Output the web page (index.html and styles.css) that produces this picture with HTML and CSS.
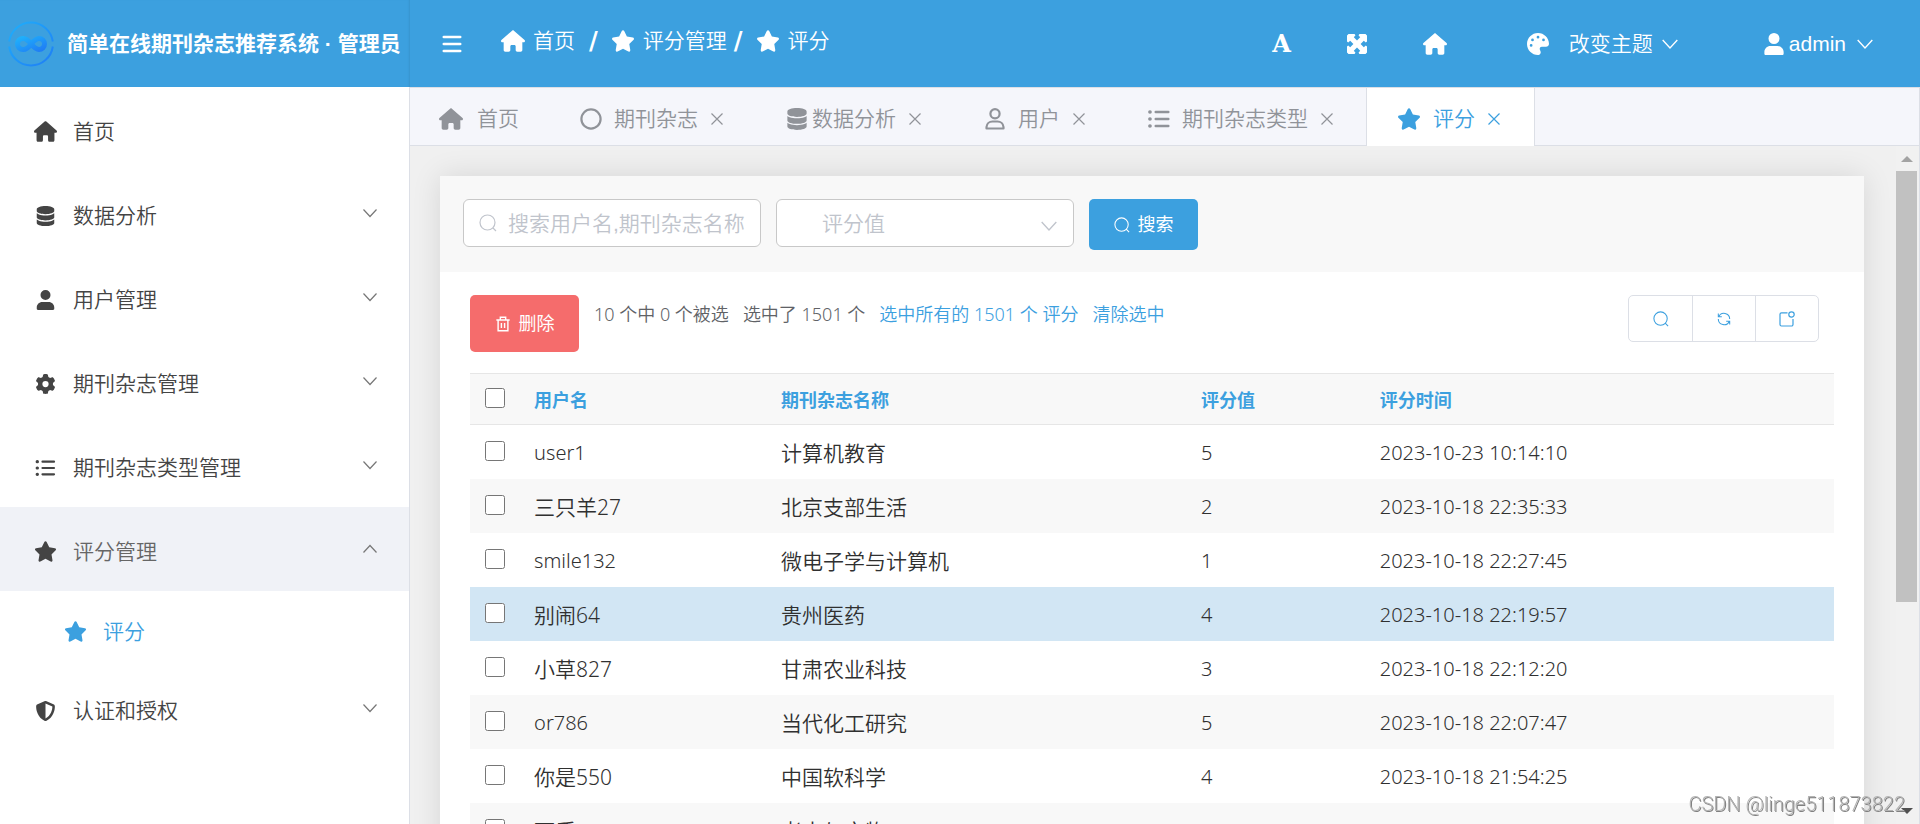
FILE: index.html
```html
<!DOCTYPE html>
<html lang="zh-CN">
<head>
<meta charset="utf-8">
<title>简单在线期刊杂志推荐系统 · 管理员</title>
<link rel="stylesheet" href="styles.css">
</head>
<body>
<svg class="sprite" aria-hidden="true">
  <symbol id="i-home" viewBox="0 0 576 512"><path d="M575.8 255.5c0 18-15 32.1-32 32.1h-32l.7 160.2c0 2.7-.2 5.4-.5 8.1V472c0 22.1-17.9 40-40 40H456c-1.100 0-2.200 0-3.300-.1c-1.400.1-2.800.1-4.200.1H416 392c-22.100 0-40-17.900-40-40V448 384c0-17.700-14.300-32-32-32H256c-17.700 0-32 14.300-32 32v64 24c0 22.100-17.900 40-40 40H160 128.100c-1.500 0-3-.1-4.500-.2c-1.200.1-2.400.2-3.600.2H104c-22.100 0-40-17.900-40-40V360c0-.9 0-1.900.1-2.800V287.600H32c-18 0-32-14-32-32.100c0-9 3-17 10-24L266.400 8c7-7 15-8 22-8s15 2 21 7L564.800 231.500c8 7 12 15 11 24z"/></symbol>
  <symbol id="i-star" viewBox="0 0 576 512"><path d="M316.900 18C311.600 7 300.400 0 288.100 0s-23.400 7-28.800 18L195 150.300 51.400 171.500c-12 1.800-22 10.200-25.700 21.700s-.7 24.200 7.900 32.700L137.800 329 113.200 474.700c-2 12 3 24.200 12.900 31.300s23 8 33.800 2.300l128.300-68.500 128.300 68.500c10.800 5.700 23.900 4.900 33.800-2.300s14.900-19.300 12.900-31.300L438.500 329 542.700 225.900c8.600-8.500 11.700-21.200 7.900-32.700s-13.700-19.900-25.700-21.700L381.200 150.300 316.900 18z"/></symbol>
  <symbol id="i-db" viewBox="0 0 448 512"><path d="M448 80v48c0 44.200-100.300 80-224 80S0 172.200 0 128V80C0 35.800 100.300 0 224 0S448 35.800 448 80zM393.200 214.700c20.800-7.400 39.900-16.900 54.800-28.600V288c0 44.200-100.300 80-224 80S0 332.200 0 288V186.100c14.900 11.800 34 21.200 54.800 28.600C99.700 230.700 159.500 240 224 240s124.300-9.300 169.200-25.300zM0 346.100c14.900 11.800 34 21.200 54.800 28.600C99.700 390.700 159.500 400 224 400s124.300-9.300 169.200-25.300c20.800-7.400 39.900-16.900 54.800-28.600V432c0 44.200-100.300 80-224 80S0 476.200 0 432V346.100z"/></symbol>
  <symbol id="i-user" viewBox="0 0 448 512"><path d="M224 256A128 128 0 1 0 224 0a128 128 0 1 0 0 256zM140 304C63 304 0 367 0 444V482C0 499 13 512 30 512H418C435 512 448 499 448 482V444C448 367 385 304 308 304z"/></symbol>
  <symbol id="i-gear" viewBox="0 0 512 512"><path fill-rule="evenodd" d="M495.900 166.600c3.200 8.700.5 18.400-6.400 24.600l-43.300 39.400c1.100 8.300 1.700 16.800 1.700 25.400s-.6 17.100-1.700 25.400l43.300 39.400c6.900 6.200 9.600 15.900 6.400 24.600c-4.400 11.900-9.700 23.300-15.800 34.300l-4.700 8.100c-6.600 11-14 21.400-22.100 31.200c-5.900 7.200-15.700 9.600-24.500 6.800l-55.700-17.700c-13.400 10.300-28.200 18.900-44 25.400l-12.500 57.100c-2 9.100-9 16.300-18.200 17.800c-13.800 2.300-28 3.500-42.500 3.500s-28.700-1.200-42.500-3.500c-9.200-1.500-16.200-8.700-18.200-17.800l-12.500-57.100c-15.800-6.500-30.600-15.100-44-25.400L83.100 425.900c-8.800 2.800-18.600.3-24.500-6.800c-8.100-9.800-15.500-20.200-22.100-31.200l-4.700-8.100c-6.100-11-11.400-22.400-15.800-34.300c-3.200-8.700-.5-18.400 6.400-24.600l43.300-39.400C64.600 273.100 64 264.600 64 256s.6-17.100 1.700-25.400L22.400 191.200c-6.900-6.200-9.600-15.900-6.400-24.600c4.400-11.900 9.700-23.300 15.800-34.300l4.700-8.100c6.600-11 14-21.400 22.100-31.200c5.900-7.200 15.700-9.600 24.500-6.800l55.700 17.700c13.400-10.300 28.200-18.900 44-25.400l12.500-57.100c2-9.100 9-16.300 18.200-17.800C227.300 1.200 241.500 0 256 0s28.700 1.200 42.500 3.500c9.200 1.500 16.200 8.700 18.200 17.800l12.500 57.100c15.800 6.500 30.600 15.100 44 25.400l55.700-17.700c8.800-2.800 18.600-.3 24.500 6.800c8.100 9.800 15.500 20.200 22.100 31.200l4.700 8.100c6.100 11 11.400 22.400 15.800 34.300zM256 336a80 80 0 1 0 0-160 80 80 0 1 0 0 160z"/></symbol>
  <symbol id="i-shield" viewBox="0 0 512 512"><path fill-rule="evenodd" d="M256 0c4.600 0 9.200 1 13.400 2.900L457.700 82.800c22 9.300 38.400 31 38.300 57.200c-.5 99.200-41.300 280.700-213.600 363.200c-16.700 8-36.100 8-52.800 0C57.300 420.700 16.500 239.200 16 140c-.1-26.200 16.300-47.900 38.300-57.200L242.700 2.900C246.800 1 251.400 0 256 0zm0 66.800V444.800C394 378 431.100 230.100 432 141.400L256 66.800z"/></symbol>
  <symbol id="i-palette" viewBox="0 0 512 512"><path fill-rule="evenodd" d="M512 256c0 .9 0 1.800 0 2.700c-.4 36.500-33.600 61.300-70.100 61.300H344c-26.500 0-48 21.500-48 48c0 3.400.4 6.700 1 9.900c2.100 10.200 6.500 20 10.800 29.900c6.100 13.800 12.100 27.500 12.100 42c0 31.800-21.600 60.700-53.400 62c-3.500.1-7 .2-10.600.2C114.600 512 0 397.400 0 256S114.600 0 256 0S512 114.600 512 256zM128 288a32 32 0 1 0-64 0 32 32 0 1 0 64 0zm0-96a32 32 0 1 0 0-64 32 32 0 1 0 0 64zM288 96a32 32 0 1 0-64 0 32 32 0 1 0 64 0zm96 96a32 32 0 1 0 0-64 32 32 0 1 0 0 64z"/></symbol>
  <symbol id="i-list" viewBox="0 0 20 16"><g stroke="currentColor" stroke-linecap="round" fill="none"><path stroke-width="2.200" d="M7 1.700H18.500M7 8H18.500M7 14.300H18.500"/><path stroke-width="3.200" d="M1.700 1.700h.2M1.700 8h.2M1.700 14.300h.2"/></g></symbol>
  <symbol id="i-bars" viewBox="0 0 20 18"><path stroke="currentColor" stroke-width="2.600" stroke-linecap="round" fill="none" d="M1.800 2H18.200M1.800 9H18.200M1.800 16H18.200"/></symbol>
  <symbol id="i-expand" viewBox="0 0 20 20"><path d="M1.500 0H7.500L8.500 1.200 6.800 3.200 10 6.400 13.200 3.200 11.500 1.200 12.500 0H18.500L20 1.500V7.500L18.800 8.500 16.800 6.800 13.600 10 16.800 13.200 18.800 11.500 20 12.500V18.500L18.500 20H12.500L11.500 18.800 13.200 16.800 10 13.600 6.800 16.800 8.500 18.800 7.500 20H1.500L0 18.500V12.500L1.200 11.500 3.200 13.200 6.400 10 3.200 6.800 1.200 8.500 0 7.500V1.500z"/></symbol>
  <symbol id="i-down" viewBox="0 0 16 16"><path class="line" d="M1.500 4.500 8 11.500 14.500 4.500"/></symbol>
  <symbol id="i-up" viewBox="0 0 16 16"><path class="line" d="M1.500 11.500 8 4.500 14.500 11.500"/></symbol>
  <symbol id="i-close" viewBox="0 0 14 14"><path class="line" d="M1.500 1.500 12.500 12.500M12.500 1.500 1.500 12.500"/></symbol>
  <symbol id="i-circle" viewBox="0 0 22 22"><circle cx="11" cy="11" r="9.600" fill="none" stroke="currentColor" stroke-width="2.200"/></symbol>
  <symbol id="i-person" viewBox="0 0 20 22"><g fill="none" stroke="currentColor" stroke-width="2.200"><circle cx="10" cy="5.800" r="4.600"/><path stroke-linejoin="round" d="M1.500 20.500V19A6 6 0 0 1 7.500 13.500H12.500A6 6 0 0 1 18.500 19V20.500z"/></g></symbol>
  <symbol id="i-search" viewBox="0 0 18 18"><path class="line" d="M14 14 17 17M16 8.500A7.500 7.500 0 1 1 1 8.500A7.500 7.500 0 1 1 16 8.500"/></symbol>
  <symbol id="i-trash" viewBox="0 0 16 18"><path class="line bold" d="M.5 4.500H15.500M5 4V1.500H11V4M2.500 4.500V16.500H13.500V4.500M6.200 8V13.500M9.800 8V13.500"/></symbol>
  <symbol id="i-refresh" viewBox="0 0 16 16"><path class="line" d="M2 5.500A6.500 6.500 0 0 1 14.500 8M1.500 1.800V5.500H5.500M14 10.500A6.500 6.500 0 0 1 1.500 8M14.500 14.200V10.500H10.500"/></symbol>
  <symbol id="i-set" viewBox="0 0 16 16"><path class="line" d="M8.500 1.800H2.500A1.500 1.500 0 0 0 1 3.300V13.500A1.500 1.500 0 0 0 2.500 15H12.500A1.500 1.500 0 0 0 14 13.500V8"/><circle class="line" cx="12.500" cy="3.500" r="2.700"/></symbol>
</svg>

<div class="app">
  <aside class="side">
    <div class="brand">
      <svg class="brand-logo" viewBox="0 0 46 46" aria-hidden="true">
        <defs><linearGradient id="lg" x1="0" y1="0" x2="1" y2="1"><stop offset="0" stop-color="#1fb0fb"/><stop offset="1" stop-color="#1f7df5"/></linearGradient></defs>
        <path fill="none" stroke="url(#lg)" stroke-width="2" d="M1.200 20.500A22 22 0 0 1 44.800 20.500M1.200 25.500A22 22 0 0 0 44.800 25.500"/>
        <path fill="none" stroke="url(#lg)" stroke-width="5" stroke-linecap="round" d="M15 17.500C22 17 24 28.500 31 28.500A5.500 5.500 0 0 0 31 17.500C24 17.500 22 29 15 28.500A5.500 5.500 0 0 1 15 17.500"/>
      </svg>
      <h1 class="brand-name">简单在线期刊杂志推荐系统 · 管理员</h1>
    </div>
    <nav class="menu">
      <a class="menu-item" href="#"><svg class="ico"><use href="#i-home"/></svg><span>首页</span></a>
      <a class="menu-item" href="#"><svg class="ico small"><use href="#i-db"/></svg><span>数据分析</span><svg class="arrow"><use href="#i-down"/></svg></a>
      <a class="menu-item" href="#"><svg class="ico small"><use href="#i-user"/></svg><span>用户管理</span><svg class="arrow"><use href="#i-down"/></svg></a>
      <a class="menu-item" href="#"><svg class="ico small"><use href="#i-gear"/></svg><span>期刊杂志管理</span><svg class="arrow"><use href="#i-down"/></svg></a>
      <a class="menu-item" href="#"><svg class="ico list"><use href="#i-list"/></svg><span>期刊杂志类型管理</span><svg class="arrow"><use href="#i-down"/></svg></a>
      <a class="menu-item open" href="#"><svg class="ico"><use href="#i-star"/></svg><span>评分管理</span><svg class="arrow"><use href="#i-up"/></svg></a>
      <a class="menu-item sub" href="#"><svg class="ico"><use href="#i-star"/></svg><span>评分</span></a>
      <a class="menu-item" href="#"><svg class="ico small"><use href="#i-shield"/></svg><span>认证和授权</span><svg class="arrow"><use href="#i-down"/></svg></a>
    </nav>
  </aside>

  <div class="main">
    <header class="top">
      <button class="icon-btn burger" aria-label="折叠菜单"><svg class="i20"><use href="#i-bars"/></svg></button>
      <nav class="crumbs">
        <a href="#"><svg class="i24"><use href="#i-home"/></svg>首页</a>
        <b class="slash first">/</b>
        <a href="#"><svg class="i24"><use href="#i-star"/></svg>评分管理</a>
        <b class="slash">/</b>
        <a href="#"><svg class="i24"><use href="#i-star"/></svg>评分</a>
      </nav>
      <div class="tools">
        <button class="icon-btn letter" aria-label="字体">A</button>
        <button class="icon-btn" aria-label="全屏"><svg class="i20"><use href="#i-expand"/></svg></button>
        <button class="icon-btn" aria-label="主页"><svg class="i24"><use href="#i-home"/></svg></button>
        <button class="icon-btn theme"><svg class="i22"><use href="#i-palette"/></svg><span>改变主题</span><svg class="i18"><use href="#i-down"/></svg></button>
        <button class="icon-btn account"><svg class="i22"><use href="#i-user"/></svg><span>admin</span><svg class="i18"><use href="#i-down"/></svg></button>
      </div>
    </header>

    <div class="tabs">
      <div class="tab home"><svg class="i24"><use href="#i-home"/></svg><span>首页</span></div>
      <div class="tab"><svg class="i22"><use href="#i-circle"/></svg><span>期刊杂志</span><button class="close" aria-label="关闭"><svg class="i14"><use href="#i-close"/></svg></button></div>
      <div class="tab tight"><svg class="i22"><use href="#i-db"/></svg><span>数据分析</span><button class="close" aria-label="关闭"><svg class="i14"><use href="#i-close"/></svg></button></div>
      <div class="tab"><svg class="i22"><use href="#i-person"/></svg><span>用户</span><button class="close" aria-label="关闭"><svg class="i14"><use href="#i-close"/></svg></button></div>
      <div class="tab"><svg class="i22"><use href="#i-list"/></svg><span>期刊杂志类型</span><button class="close" aria-label="关闭"><svg class="i14"><use href="#i-close"/></svg></button></div>
      <div class="tab active"><svg class="i24"><use href="#i-star"/></svg><span>评分</span><button class="close" aria-label="关闭"><svg class="i14"><use href="#i-close"/></svg></button></div>
    </div>

    <div class="body">
      <main class="view">
        <section class="card">
          <form class="filters">
            <div class="field">
              <svg class="lead"><use href="#i-search"/></svg>
              <input type="text" aria-label="搜索" placeholder="搜索用户名,期刊杂志名称">
            </div>
            <div class="field">
              <select aria-label="评分值"><option>评分值</option></select>
              <svg class="trail"><use href="#i-down"/></svg>
            </div>
            <button class="btn primary" type="button"><svg class="i16"><use href="#i-search"/></svg>搜索</button>
          </form>

          <div class="content">
            <div class="actions">
              <button class="btn danger" type="button"><svg class="i16"><use href="#i-trash"/></svg>删除</button>
              <div class="summary">
                <span>10 个中 0 个被选</span>
                <span>选中了 1501 个</span>
                <a href="#">选中所有的 1501 个 评分</a>
                <a href="#">清除选中</a>
              </div>
              <div class="group">
                <button type="button" aria-label="搜索"><svg class="i16"><use href="#i-search"/></svg></button>
                <button type="button" aria-label="刷新"><svg class="i14"><use href="#i-refresh"/></svg></button>
                <button type="button" aria-label="设置"><svg class="i16"><use href="#i-set"/></svg></button>
              </div>
            </div>

            <table class="grid">
              <colgroup><col class="c-check"><col class="c-user"><col class="c-name"><col class="c-score"><col class="c-time"></colgroup>
              <thead>
                <tr><th><input type="checkbox" aria-label="全选"></th><th>用户名</th><th>期刊杂志名称</th><th>评分值</th><th>评分时间</th></tr>
              </thead>
              <tbody>
                <tr><td><input type="checkbox" aria-label="user1"></td><td class="latin">user1</td><td>计算机教育</td><td class="latin">5</td><td class="latin">2023-10-23 10:14:10</td></tr>
                <tr><td><input type="checkbox" aria-label="三只羊27"></td><td>三只羊27</td><td>北京支部生活</td><td class="latin">2</td><td class="latin">2023-10-18 22:35:33</td></tr>
                <tr><td><input type="checkbox" aria-label="smile132"></td><td class="latin">smile132</td><td>微电子学与计算机</td><td class="latin">1</td><td class="latin">2023-10-18 22:27:45</td></tr>
                <tr class="hover"><td><input type="checkbox" aria-label="别闹64"></td><td>别闹64</td><td>贵州医药</td><td class="latin">4</td><td class="latin">2023-10-18 22:19:57</td></tr>
                <tr><td><input type="checkbox" aria-label="小草827"></td><td>小草827</td><td>甘肃农业科技</td><td class="latin">3</td><td class="latin">2023-10-18 22:12:20</td></tr>
                <tr><td><input type="checkbox" aria-label="or786"></td><td class="latin">or786</td><td>当代化工研究</td><td class="latin">5</td><td class="latin">2023-10-18 22:07:47</td></tr>
                <tr><td><input type="checkbox" aria-label="你是550"></td><td>你是550</td><td>中国软科学</td><td class="latin">4</td><td class="latin">2023-10-18 21:54:25</td></tr>
                <tr><td><input type="checkbox" aria-label="丽质"></td><td>丽质</td><td>考古与文物</td><td></td><td></td></tr>
              </tbody>
            </table>
          </div>
        </section>
      </main>
      <div class="scrollbar" aria-hidden="true"><i class="up"></i><i class="thumb"></i><i class="down"></i></div>
    </div>
  </div>
</div>
<div class="watermark">CSDN @linge511873822</div>
</body>
</html>
```
FILE: styles.css
```css
* { box-sizing: border-box; }

:root {
  --blue: #3ca0df;
  --gray: #909399;
  --line: #dcdfe6;
}

body {
  margin: 0;
  height: 100vh;
  overflow: hidden;
  font-family: "Liberation Sans", "Noto Sans CJK SC", sans-serif;
  font-size: 21px;
  font-weight: 350;
  line-height: 32px;
  color: #303030;
}

a { color: inherit; text-decoration: none; }
button { font: inherit; color: inherit; border: 0; background: none; padding: 0; }
svg { fill: currentColor; flex: none; }
.sprite { display: none; }
.line { fill: none; stroke: currentColor; stroke-width: 1.2; }
.line.bold { stroke-width: 1.6; }

.i14 { width: 14px; height: 14px; }
.i16 { width: 16px; height: 16px; }
.i18 { width: 18px; height: 18px; }
.i20 { width: 20px; height: 20px; }
.i22 { width: 22px; height: 22px; }
.i24 { width: 24px; height: 22px; }

.app { display: flex; height: 100%; }

/* sidebar */
.side {
  flex: none;
  width: 410px;
  background: #fff;
  border-right: 1px solid var(--line);
}
.brand {
  display: flex;
  align-items: center;
  gap: 13px;
  height: 87px;
  margin-right: -1px;
  padding-left: 8px;
  background: var(--blue);
  color: #fff;
  white-space: nowrap;
  box-shadow: inset -2px 0 2px -1px rgba(0, 0, 0, .08);
}
.brand-logo { width: 46px; height: 46px; }
.brand-name { margin: 0; font-size: 21px; font-weight: 700; }
.menu-item {
  display: flex;
  align-items: center;
  height: 84px;
  padding: 5px 31px 0 34px;
  color: #444;
}
.menu-item .ico { width: 23px; height: 21px; margin-right: 16px; }
.menu-item .small { height: 20px; }
.menu-item .list { height: 16px; }
.menu-item .arrow { width: 16px; height: 16px; margin: 0 0 6px auto; color: #777; }
.menu-item.open { background: #f0f2f7; color: #666; }
.menu-item.open .ico { color: #444; }
.menu-item.sub { height: 75px; padding: 6px 31px 0 64px; color: var(--blue); }

/* header */
.main { flex: 1; min-width: 0; display: flex; flex-direction: column; }
.top {
  flex: none;
  display: flex;
  align-items: center;
  height: 87px;
  padding: 0 46px 0 32px;
  background: var(--blue);
  color: #fff;
}
.icon-btn { display: flex; align-items: center; }
.crumbs { display: flex; align-items: center; margin-left: 39px; padding-bottom: 6px; }
.crumbs a { display: flex; align-items: center; gap: 8px; }
.slash { padding: 0 13px 0 7px; font-family: "DejaVu Sans", sans-serif; font-size: 24px; }
.slash.first { padding-left: 14px; }
.tools { display: flex; align-items: center; margin-left: auto; }
.tools .icon-btn { margin-left: 56px; }
.tools .letter { font: 700 24px/32px "DejaVu Serif", serif; }
.tools .theme { gap: 8px; margin-left: 80px; }
.tools .theme span { padding-left: 12px; }
.tools .account { gap: 4px; margin-left: 84px; }
.tools .account .i18 { margin-left: 6px; }

/* tabs */
.tabs {
  flex: none;
  display: flex;
  height: 59px;
  background: #f5f6fb;
  border: 1px solid var(--line);
  border-left: 0;
  color: var(--gray);
}
.tab { display: flex; align-items: center; gap: 12px; padding: 4px 30px 0 32px; }
.tab.home { gap: 14px; padding: 4px 29px 0; }
.tab.tight { gap: 4px; }
.tab.tight .close { margin-left: 8px; }
.close { display: flex; }
.tab.active {
  height: 59px;
  margin-left: 2px;
  padding: 4px 33px 2px 30px;
  background: #fff;
  color: var(--blue);
  border: solid var(--line);
  border-width: 0 1px;
}

/* page body */
.body { flex: 1; min-height: 0; display: flex; background: #f0f0f0; border-right: 1px solid var(--line); }
.view { flex: 1; min-width: 0; overflow: hidden; padding: 30px 32px 0 30px; }
.card { background: #fff; box-shadow: 0 0 28px rgba(0, 0, 0, .11); }
.filters { display: flex; gap: 15px; padding: 23px; height: 96px; background: #f8f8f8; }
.field { position: relative; width: 298px; height: 48px; color: #c0c4cc; }
.field input, .field select {
  width: 100%;
  height: 100%;
  border: 1px solid #c8c8c8;
  border-radius: 6px;
  background: #fff;
  font: inherit;
  color: #c0c4cc;
  outline: 0;
  appearance: none;
}
.field input { padding: 2px 0 0 44px; }
.field input::placeholder { color: #c0c4cc; opacity: 1; }
.field select { padding: 2px 44px 0 45px; }
.lead, .trail { position: absolute; width: 18px; height: 18px; top: 15px; }
.lead { left: 16px; }
.trail { right: 16px; top: 18px; }

.btn {
  display: flex;
  align-items: center;
  justify-content: center;
  gap: 8px;
  width: 109px;
  height: 51px;
  border-radius: 5px;
  color: #fff;
  font-size: 18px;
  font-weight: 400;
}
.primary { background: var(--blue); }
.danger { height: 57px; background: #f56c6c; }

.content { padding: 23px 30px 0; }
.actions { display: flex; align-items: flex-start; gap: 15px; }
.summary {
  display: flex;
  gap: 14px;
  padding-top: 3px;
  font-family: "Noto Sans", "Noto Sans CJK SC", sans-serif;
  font-size: 18px;
  color: #606266;
}
.summary a { color: var(--blue); }
.group {
  display: flex;
  margin: 0 15px 0 auto;
  border: 1px solid var(--line);
  border-radius: 5px;
  color: var(--blue);
}
.group button { display: grid; place-items: center; width: 63px; height: 45px; }
.group button + button { border-left: 1px solid var(--line); }

/* table */
.grid {
  width: 100%;
  margin-top: 21px;
  border-collapse: collapse;
  table-layout: fixed;
  font-family: "Noto Sans", "Noto Sans CJK SC", sans-serif;
}
.c-check { width: 3.6%; }
.c-user { width: 18.1%; }
.c-name { width: 30.8%; }
.c-score { width: 13.1%; }
.grid th, .grid td { padding: 2px 15px 0; text-align: left; vertical-align: middle; }
.grid th {
  height: 51px;
  background: #f8f8f8;
  border: solid #e6e6e6;
  border-width: 1px 0;
  font-size: 18px;
  font-weight: 700;
  color: var(--blue);
}
.grid td { height: 54px; }
.grid .latin { font-size: 20px; }
.grid tbody tr:nth-child(even) { background: #f8f8f8; }
.grid tbody tr.hover { background: #d2e6f4; }
.grid input { display: block; width: 20px; height: 20px; margin: 0 0 4px; }

/* scrollbar */
.scrollbar {
  flex: none;
  display: flex;
  flex-direction: column;
  align-items: center;
  width: 23px;
  padding: 10px 2px 10px 0;
  background: #f1f1f1;
}
.thumb { flex: 0 0 65.5%; width: 21px; margin-top: 9px; background: #c1c1c1; }
.up, .down { border: solid transparent; border-width: 0 6px; }
.up { border-bottom: 6px solid #a3a3a3; }
.down { margin-top: auto; border-top: 6px solid #505050; }

.watermark {
  position: fixed;
  right: 15px;
  bottom: 4px;
  font-family: Roboto, sans-serif;
  font-size: 20px;
  font-weight: 300;
  color: #b4b4b4;
  text-shadow: 1px 1px 0 #808080;
}
```
